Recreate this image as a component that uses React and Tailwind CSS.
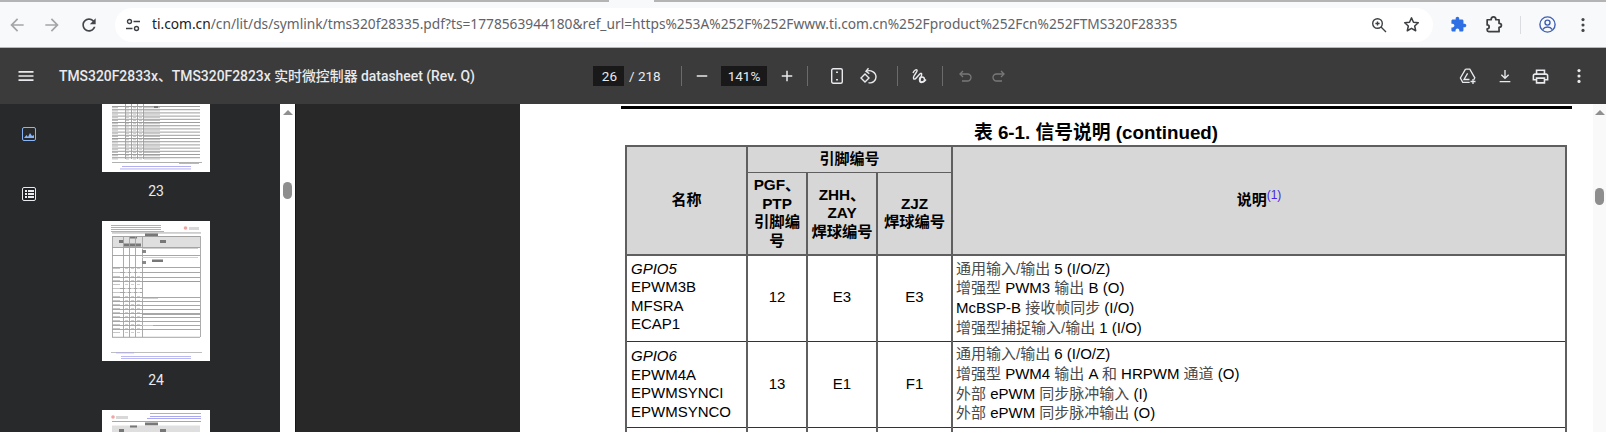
const CJK = '"Liberation Sans", "Noto Sans CJK SC", sans-serif';

function Ico({ size = 20, vb = 24, className = "", children, fill = "currentColor" }) {
  return (
    <svg width={size} height={size} viewBox={`0 0 ${vb} ${vb}`} fill={fill} className={"shrink-0 " + className}>
      {children}
    </svg>
  );
}

function Dots({ className = "" }) {
  return (
    <Ico size={20} className={className}>
      <circle cx="12" cy="5.5" r="1.9" />
      <circle cx="12" cy="12" r="1.9" />
      <circle cx="12" cy="18.5" r="1.9" />
    </Ico>
  );
}

const PUZZLE =
  "M20.5 11H19V7c0-1.1-.9-2-2-2h-4V3.5C13 2.12 11.88 1 10.5 1S8 2.12 8 3.5V5H4c-1.1 0-1.99.9-1.99 2v3.8H3.5c1.49 0 2.7 1.21 2.7 2.7s-1.21 2.7-2.7 2.7H2V20c0 1.1.9 2 2 2h3.8v-1.5c0-1.49 1.21-2.7 2.7-2.7 1.49 0 2.7 1.21 2.7 2.7V22H17c1.1 0 2-.9 2-2v-4h1.5c1.38 0 2.5-1.12 2.5-2.5S21.88 11 20.5 11z";

function BrowserBar() {
  return (
    <div className="h-[48px] shrink-0 flex flex-col bg-[#f8f9fa]">
      <div className="h-[2px] flex shrink-0">
        <div className="w-[609px] bg-[#b4b4b4]" />
        <div className="w-[45px] bg-[#f8f9fa]" />
        <div className="flex-1 bg-[#b4b4b4]" />
      </div>
      <div className="flex-1 flex items-center border-b border-[#b8b8b8]">
        <Ico size={20} className="ml-[7px] text-[#a3a5a8]">
          <path d="M20 11H7.83l5.59-5.59L12 4l-8 8 8 8 1.41-1.41L7.83 13H20v-2z" />
        </Ico>
        <Ico size={20} className="ml-[15px] text-[#a3a5a8]">
          <path d="M4 11h12.17l-5.59-5.59L12 4l8 8-8 8-1.41-1.41L16.17 13H4v-2z" />
        </Ico>
        <Ico size={20} className="ml-[17px] text-[#44474a]">
          <path d="M17.65 6.35C16.2 4.9 14.21 4 12 4c-4.42 0-7.99 3.58-7.99 8s3.57 8 7.99 8c3.73 0 6.84-2.55 7.73-6h-2.08c-.82 2.33-3.04 4-5.65 4-3.31 0-6-2.69-6-6s2.69-6 6-6c1.66 0 3.14.69 4.22 1.78L13 11h7V4l-2.35 2.35z" />
        </Ico>
        <div className="ml-[16px] w-[1318px] h-[34px] rounded-full bg-white flex items-center">
          <div className="ml-[11px] flex items-center">
            <svg width="14" height="14" viewBox="0 0 14 14" fill="none" stroke="#3c4043" strokeWidth="1.4">
              <circle cx="3.5" cy="3.5" r="2" />
              <path d="M7.5 3.5H14M0 10.5h6.5" />
              <circle cx="10.5" cy="10.5" r="2" />
            </svg>
          </div>
          <div
            className="ml-[12px] text-[13.74px] whitespace-nowrap text-[#5f6368]"
            style={{ fontFamily: '"Noto Sans", sans-serif' }}
          >
            <span className="text-[#202124]">ti.com.cn</span>
            /cn/lit/ds/symlink/tms320f28335.pdf?ts=1778563944180&amp;ref_url=https%253A%252F%252Fwww.ti.com.cn%252Fproduct%252Fcn%252FTMS320F28335
          </div>
          <div className="ml-auto flex items-center text-[#3c4043] mr-[12px]">
            <svg width="16" height="16" viewBox="0 0 16 16" fill="none" stroke="currentColor" strokeWidth="1.4">
              <circle cx="6.5" cy="6.5" r="4.8" />
              <path d="M10 10l5 5M4.4 6.5h4.2M6.5 4.4v4.2" />
            </svg>
            <Ico size={19} fill="none" className="ml-[15px]">
              <path d="M12 3.6l2.5 5.6 6.1.6-4.6 4.1 1.3 6-5.3-3.1-5.3 3.1 1.3-6-4.6-4.1 6.1-.6z" stroke="currentColor" strokeWidth="1.9" strokeLinejoin="round" />
            </Ico>
          </div>
        </div>
        <Ico size={17} className="ml-[17px] text-[#2f6fe4]">
          <path d={PUZZLE} />
        </Ico>
        <Ico size={19} fill="none" className="ml-[17px] text-[#3c4043]">
          <path
            d="M4 6h5c0-2.200 1.200-3.500 3-3.500S15 3.800 15 6h4v4.500c2 0 3 .9 3 2.500s-1 2.500-3 2.500V21H6c-1 0-2-1-2-2v-1.500c1.500 0 2.500-1 2.500-2.500S5.500 12.500 4 12.500z"
            stroke="currentColor"
            strokeWidth="2.200"
            strokeLinejoin="round"
          />
        </Ico>
        <div className="ml-[17px] w-px h-[18px] bg-[#dadce0]" />
        <svg width="17" height="17" viewBox="0 0 17 17" fill="none" stroke="#3f5fb5" strokeWidth="1.4" className="ml-[18px] shrink-0">
          <circle cx="8.5" cy="8.5" r="7.6" />
          <circle cx="8.5" cy="6.6" r="2.5" />
          <path d="M3.6 13.6c1.3-1.9 3-2.6 4.9-2.6s3.6.7 4.9 2.6" />
        </svg>
        <Dots className="ml-[17px] text-[#44474a]" />
      </div>
    </div>
  );
}

function Divider({ className = "" }) {
  return <div className={"w-px h-[20px] bg-[#6b6b6b] shrink-0 " + className} />;
}

function PdfToolbar() {
  return (
    <div className="h-[56px] shrink-0 bg-[#3b3b3b] flex items-center text-[#e8eaed] text-[13.500px]" style={{ fontFamily: "Roboto, sans-serif" }}>
      <div className="w-[593px] shrink-0 flex items-center">
        <Ico size={20} className="ml-[16px]">
          <path d="M3 18h18v-2H3v2zm0-5h18v-2H3v2zm0-7v2h18V6H3z" />
        </Ico>
        <div
          className="ml-[23px] text-[13.900px] font-medium whitespace-nowrap"
          style={{ fontFamily: 'Roboto, "Noto Sans CJK SC", sans-serif' }}
        >
          TMS320F2833x、TMS320F2823x 实时微控制器 datasheet (Rev. Q)
        </div>
      </div>
      <div className="w-[31px] h-[20px] bg-[#191919] flex items-center justify-end pr-[7px]">26</div>
      <div className="ml-[5px] w-[32px] whitespace-nowrap">/ 218</div>
      <Divider className="ml-[20px]" />
      <Ico size={18} className="ml-[11px]"><path d="M5 11h14v2H5z" /></Ico>
      <div className="ml-[10px] w-[46px] h-[20px] bg-[#191919] flex items-center justify-center">141%</div>
      <Ico size={18} className="ml-[11px]"><path d="M19 13h-6v6h-2v-6H5v-2h6V5h2v6h6v2z" /></Ico>
      <Divider className="ml-[11px]" />
      <svg width="12" height="16" viewBox="0 0 12 16" fill="none" stroke="currentColor" strokeWidth="1.4" className="ml-[23px] shrink-0">
        <rect x="0.7" y="0.7" width="10.6" height="14.6" rx="1.5" />
        <path d="M6 3.6v1.4M6 11v1.4" strokeWidth="1.8" />
      </svg>
      <svg width="18" height="18" viewBox="0 0 18 18" fill="none" stroke="currentColor" strokeWidth="1.4" className="ml-[17px] shrink-0">
        <path d="M5 7l4 4-4 4-4-4z" />
        <path d="M6 4.4c4.5-2 10 .5 10 5.6 0 4-3.6 6.6-7.5 5.6" />
        <path d="M8.5 1.2L6 4.4l3.3 2.4" />
      </svg>
      <Divider className="ml-[19px]" />
      <svg width="15" height="17" viewBox="0 0 15 17" fill="none" stroke="currentColor" strokeWidth="1.4" className="ml-[14px] shrink-0">
        <path d="M1 5c1-2.500 3-4 4-3S3 6 2 8s-.5 3.500 1 3 4-5 5.500-5.500S10 6.500 9 9s-2 5.500.5 5.500 3.500-1.500 4.500-3" />
        <circle cx="10" cy="11.500" r="2.500" />
      </svg>
      <Divider className="ml-[15px]" />
      <svg width="13" height="13" viewBox="0 0 13 13" fill="none" stroke="#77797b" strokeWidth="1.3" className="ml-[16px] shrink-0">
        <path d="M4 1L1 4l3 3" />
        <path d="M1 4h7.500a3.500 3.500 0 010 7H3" />
      </svg>
      <svg width="13" height="13" viewBox="0 0 13 13" fill="none" stroke="#77797b" strokeWidth="1.3" className="ml-[20px] shrink-0">
        <path d="M9 1l3 3-3 3" />
        <path d="M12 4H4.500a3.500 3.500 0 000 7H10" />
      </svg>
      <svg width="18" height="18" viewBox="0 0 18 18" fill="none" stroke="currentColor" strokeWidth="1.3" className="ml-[454px] shrink-0">
        <path d="M6.500 2.200h4.300l5 8.600-1 2M6.500 2.200L1.400 11l2.300 4.300h7" />
        <path d="M8.600 6.300L5 12.500h5.500" />
        <path d="M14 12v5M11.500 14.500h5" />
      </svg>
      <Ico size={16} fill="none" className="ml-[20px]">
        <path d="M12 3v12M6.500 10l5.500 5.500 5.500-5.500M4 20.500h16" stroke="currentColor" strokeWidth="2" />
      </Ico>
      <Ico size={19} className="ml-[18px]">
        <path d="M19 8h-1V3H6v5H5c-1.660 0-3 1.340-3 3v6h4v4h12v-4h4v-6c0-1.660-1.340-3-3-3zM8 5h8v3H8V5zm8 12v2H8v-4h8v2zm2-2v-2H6v2H4v-4c0-.55.45-1 1-1h14c.55 0 1 .45 1 1v4h-2z" />
      </Ico>
      <Dots className="ml-[19px]" />
    </div>
  );
}

const BLUE = "#aaa8ee";
const GREY = "#9d9d9d";

function rowLines(from, to, step) {
  const ys = [];
  for (let y = from; y <= to; y += step) ys.push(y);
  return ys;
}

// thumbnail of page 23: only the lower part is in view
function Thumb23() {
  return (
    <svg width="108" height="68" viewBox="0 0 108 68" className="block bg-white shrink-0">
      <g className="blur-[0.3px]">
        {rowLines(2, 54, 3.2).map((y) => (
          <g key={y}>
            <rect x="10" y={y} width="88" height="1" fill={GREY} />
            <rect x="10" y={y + 1.2} width="6" height="1" fill="#bdbdbd" />
            <rect x="24" y={y + 1.2} width="3" height="1" fill="#c4c4c4" />
            <rect x="31" y={y + 1.2} width="3" height="1" fill="#c4c4c4" />
            <rect x="37" y={y + 1.2} width="3" height="1" fill="#c4c4c4" />
            <rect x="42" y={y + 1.2} width="16" height="1" fill="#bdbdbd" />
          </g>
        ))}
        {[23, 29, 35, 41].map((x) => (
          <rect key={x} x={x} y="0" width="0.9" height="55" fill={GREY} />
        ))}
        <rect x="52" y="2" width="4" height="2" fill="#777" />
        <rect x="10" y="58" width="90" height="1" fill="#b0b0b0" />
        <rect x="77" y="59" width="20" height="0.9" fill={BLUE} />
        <rect x="20" y="62" width="69" height="0.9" fill={BLUE} />
        <rect x="18" y="64.500" width="71" height="0.9" fill={BLUE} />
      </g>
    </svg>
  );
}

function Thumb24() {
  return (
    <svg width="108" height="140" viewBox="0 0 108 140" className="block bg-white shrink-0">
      <g className="blur-[0.3px]">
        {[4, 6, 8, 10].map((y, i) => (
          <rect key={y} x="9" y={y} width={i === 3 ? 53 : 50} height="1" fill={BLUE} />
        ))}
        <circle cx="83.500" cy="7" r="1.800" fill="#f2a4a4" />
        <rect x="87" y="6" width="10" height="3" fill="#d8d8d8" />
        <rect x="10" y="11.500" width="89" height="0.9" fill={GREY} />
        <rect x="43" y="12.500" width="13" height="3" fill="#777" />
        <rect x="10" y="15.500" width="88" height="10.500" fill="#dfdfdf" />
        <rect x="17" y="19" width="5" height="3" fill="#777" />
        <rect x="28" y="15.500" width="7" height="2" fill="#777" />
        <rect x="22" y="22.500" width="17" height="3" fill="#777" />
        <rect x="58" y="19" width="6" height="3" fill="#777" />
        {[15, 26, 34, 46, 51, 56, 60, 67, 71, 76, 80, 84, 88, 92, 96, 100, 104, 108, 115.800].map((y) => (
          <rect key={y} x="10" y={y} width={y > 60 && y < 76 ? 30 : 88} height="0.9" fill={y > 110 || y === 15 || y === 26 ? "#999" : GREY} />
        ))}
        {[10, 21, 27, 33, 40, 98].map((x) => (
          <rect key={x} x={x} y="15" width="0.9" height="101" fill="#a3a3a3" />
        ))}
        <rect x="40" y="60" width="58" height="0.9" fill={GREY} />
        <rect x="40" y="93" width="58" height="0.9" fill={GREY} />
        <rect x="40" y="27" width="56" height="1" fill="#cfcfcf" />
        <rect x="40" y="36" width="56" height="1" fill="#cfcfcf" />
        <rect x="40" y="29" width="4" height="3" fill="#888" />
        <rect x="40" y="40" width="4" height="3" fill="#888" />
        <rect x="50" y="38.500" width="11" height="2.500" fill="#777" />
        <rect x="40" y="77" width="16" height="0.9" fill="#ccc" />
        <rect x="40" y="104" width="11" height="0.9" fill="#ccc" />
        {rowLines(47, 114, 4).map((y) => (
          <g key={y}>
            <rect x="11" y={y} width="7" height="1" fill="#c6c6c6" />
            <rect x="23" y={y} width="3" height="1" fill="#d0d0d0" />
            <rect x="29" y={y} width="3" height="1" fill="#d0d0d0" />
            <rect x="35" y={y} width="3" height="1" fill="#d0d0d0" />
          </g>
        ))}
        <rect x="9" y="131" width="91" height="1" fill="#bdbdbd" />
        <rect x="14" y="131.500" width="18" height="0.8" fill={BLUE} />
        <rect x="19" y="135" width="70" height="0.8" fill={BLUE} />
        <rect x="19" y="137.200" width="70" height="0.8" fill={BLUE} />
      </g>
    </svg>
  );
}

function Thumb25() {
  return (
    <svg width="108" height="22" viewBox="0 0 108 22" className="block bg-white shrink-0">
      <g className="blur-[0.3px]">
        <circle cx="11" cy="7" r="1.800" fill="#f2a4a4" />
        <rect x="14" y="6" width="12" height="3" fill="#d8d8d8" />
        {[3, 6, 8].map((y) => (
          <rect key={y} x={y === 8 ? 45 : 48} y={y} width={y === 8 ? 54 : 51} height="1" fill={BLUE} />
        ))}
        <rect x="10" y="11" width="89" height="0.9" fill={GREY} />
        <rect x="43" y="12.500" width="13" height="3" fill="#777" />
        <rect x="10" y="15.500" width="88" height="7" fill="#dfdfdf" />
        <rect x="17" y="19" width="5" height="3" fill="#777" />
        <rect x="28" y="15.500" width="7" height="2" fill="#777" />
        <rect x="58" y="19" width="6" height="3" fill="#777" />
      </g>
    </svg>
  );
}

function PageNum({ n }) {
  return (
    <div className="h-[49px] flex items-start pt-[10px] text-[14px] leading-[18px] text-[#e8eaed]" style={{ fontFamily: "Roboto, sans-serif" }}>
      {n}
    </div>
  );
}

function ScrollStrip({ thumbTop, className = "" }) {
  return (
    <div className={"shrink-0 flex flex-col items-center " + className}>
      <div className="mt-[6px] w-0 h-0 border-x-[5px] border-x-transparent border-b-[5px] border-b-[#8f8f8f]" />
      <div className={"w-[9px] h-[17px] rounded-full bg-[#8e8e8e] " + thumbTop} />
    </div>
  );
}

function Sidebar() {
  return (
    <div className="w-[280px] shrink-0 bg-[#28292b] flex">
      <div className="w-[58px] shrink-0 flex flex-col items-center pt-[23px]">
        <div className="w-[14px] h-[14px] rounded-[2px] border border-[#8ab4f8] flex items-end justify-center overflow-hidden">
          <svg width="12" height="12" viewBox="0 0 12 12" fill="#8ab4f8">
            <path d="M1 10l2.500-3 1.500 2 2-4 2 3 2-1v3z" />
          </svg>
        </div>
        <div className="mt-[46px] w-[14px] h-[14px] rounded-[2px] border border-[#e8eaed] bg-[#202124] flex flex-col justify-center gap-[1px] px-[1.500px]">
          {[0, 1, 2].map((i) => (
            <div key={i} className="flex gap-[1px]">
              <div className="w-[2px] h-[2px] bg-[#e8eaed]" />
              <div className="flex-1 h-[2px] bg-[#e8eaed]" />
            </div>
          ))}
        </div>
      </div>
      <div className="flex-1 flex flex-col items-center pr-[26px]">
        <Thumb23 />
        <PageNum n={23} />
        <Thumb24 />
        <PageNum n={24} />
        <Thumb25 />
      </div>
    </div>
  );
}

function GreyCjk({ children }) {
  return <span className="text-[#4a4a4a]">{children}</span>;
}

function DescCell({ lines }) {
  return (
    <td className="border-l-2 border-[#5f5f5f] px-[3px] pt-[2.500px] align-top text-left text-[15px] leading-[19.800px] whitespace-nowrap">
      {lines.map((line, i) => (
        <div key={i}>{line}</div>
      ))}
    </td>
  );
}

const ROWS = [
  {
    names: ["GPIO5", "EPWM3B", "MFSRA", "ECAP1"],
    pins: ["12", "E3", "E3"],
    pad: "pb-[3px]",
    desc: [
      <><GreyCjk>通用输入/输出</GreyCjk> 5 (I/O/Z)</>,
      <><GreyCjk>增强型</GreyCjk> PWM3 <GreyCjk>输出</GreyCjk> B (O)</>,
      <>McBSP-B <GreyCjk>接收帧同步</GreyCjk> (I/O)</>,
      <><GreyCjk>增强型捕捉输入/输出</GreyCjk> 1 (I/O)</>,
    ],
  },
  {
    names: ["GPIO6", "EPWM4A", "EPWMSYNCI", "EPWMSYNCO"],
    pins: ["13", "E1", "F1"],
    pad: "",
    desc: [
      <><GreyCjk>通用输入/输出</GreyCjk> 6 (I/O/Z)</>,
      <><GreyCjk>增强型</GreyCjk> PWM4 <GreyCjk>输出</GreyCjk> A <GreyCjk>和</GreyCjk> HRPWM <GreyCjk>通道</GreyCjk> (O)</>,
      <><GreyCjk>外部</GreyCjk> ePWM <GreyCjk>同步脉冲输入</GreyCjk> (I)</>,
      <><GreyCjk>外部</GreyCjk> ePWM <GreyCjk>同步脉冲输出</GreyCjk> (O)</>,
    ],
  },
];

function PinTable() {
  return (
    <table
      className="ml-[105px] w-[942px] table-fixed border-collapse border-2 border-b-0 border-[#5f5f5f] text-[15px] leading-[18.500px] text-center text-black"
      style={{ fontFamily: CJK }}
    >
      <colgroup>
        <col className="w-[121px]" />
        <col className="w-[60px]" />
        <col className="w-[70px]" />
        <col className="w-[75px]" />
        <col />
      </colgroup>
      <thead className="font-bold">
        <tr className="h-[26px] bg-white">
          <th rowSpan={2} className="bg-[#d7d7d7] border-b-2 border-[#5f5f5f]">名称</th>
          <th colSpan={3} className="bg-[#d7d7d7] border-l-2 border-b border-[#5f5f5f]">引脚编号</th>
          <th rowSpan={2} className="bg-[#d7d7d7] border-l-2 border-b-2 border-[#5f5f5f] font-bold">
            说明<sup className="text-[12px] font-normal text-[#4a22e8]">(1)</sup>
          </th>
        </tr>
        <tr className="h-[83px] bg-[#d7d7d7] text-[15.300px]">
          <th className="border-l-2 border-b-2 border-[#5f5f5f] px-[2px]">PGF、<br />PTP<br />引脚编<br />号</th>
          <th className="border-l-2 border-b-2 border-[#5f5f5f] px-[2px]">ZHH、<br />ZAY<br />焊球编号</th>
          <th className="border-l-2 border-b-2 border-[#5f5f5f] px-0">ZJZ<br />焊球编号</th>
        </tr>
      </thead>
      <tbody>
        {ROWS.map((row) => (
          <tr key={row.names[0]} className="h-[86px] border-b border-[#333]">
            <td className={"px-[4px] align-middle text-left whitespace-nowrap " + row.pad}>
              {row.names.map((n, i) => (
                <div key={n} className={i === 0 ? "italic" : ""}>{n}</div>
              ))}
            </td>
            {row.pins.map((p, i) => (
              <td key={i} className={"border-l-2 border-[#5f5f5f] " + row.pad}>{p}</td>
            ))}
            <DescCell lines={row.desc} />
          </tr>
        ))}
        <tr className="h-[20px]">
          <td />
          <td className="border-l-2 border-[#5f5f5f]" />
          <td className="border-l-2 border-[#5f5f5f]" />
          <td className="border-l-2 border-[#5f5f5f]" />
          <td className="border-l-2 border-[#5f5f5f]" />
        </tr>
      </tbody>
    </table>
  );
}

function PdfPage() {
  return (
    <div className="flex-1 bg-white overflow-hidden pt-[2px]">
      <div className="ml-[101px] w-[951px] h-[3px] bg-black" />
      <h2
        className="h-[36px] ml-[105px] w-[942px] flex items-end justify-center pb-[2px] text-[18.800px] font-bold leading-[20px] text-black"
        style={{ fontFamily: CJK }}
      >
        表 6-1. 信号说明 (continued)
      </h2>
      <PinTable />
    </div>
  );
}

export default function App() {
  return (
    <div className="w-[1606px] h-[432px] overflow-hidden flex flex-col">
      <BrowserBar />
      <PdfToolbar />
      <div className="flex-1 flex min-h-0">
        <Sidebar />
        <ScrollStrip thumbTop="mt-[67px]" className="w-[15px] bg-white" />
        <div className="w-[225px] shrink-0 bg-[#282828] border-l border-[#161616]" />
        <PdfPage />
        <ScrollStrip thumbTop="mt-[73px]" className="w-[13px] bg-[#f9f9f9]" />
      </div>
    </div>
  );
}
